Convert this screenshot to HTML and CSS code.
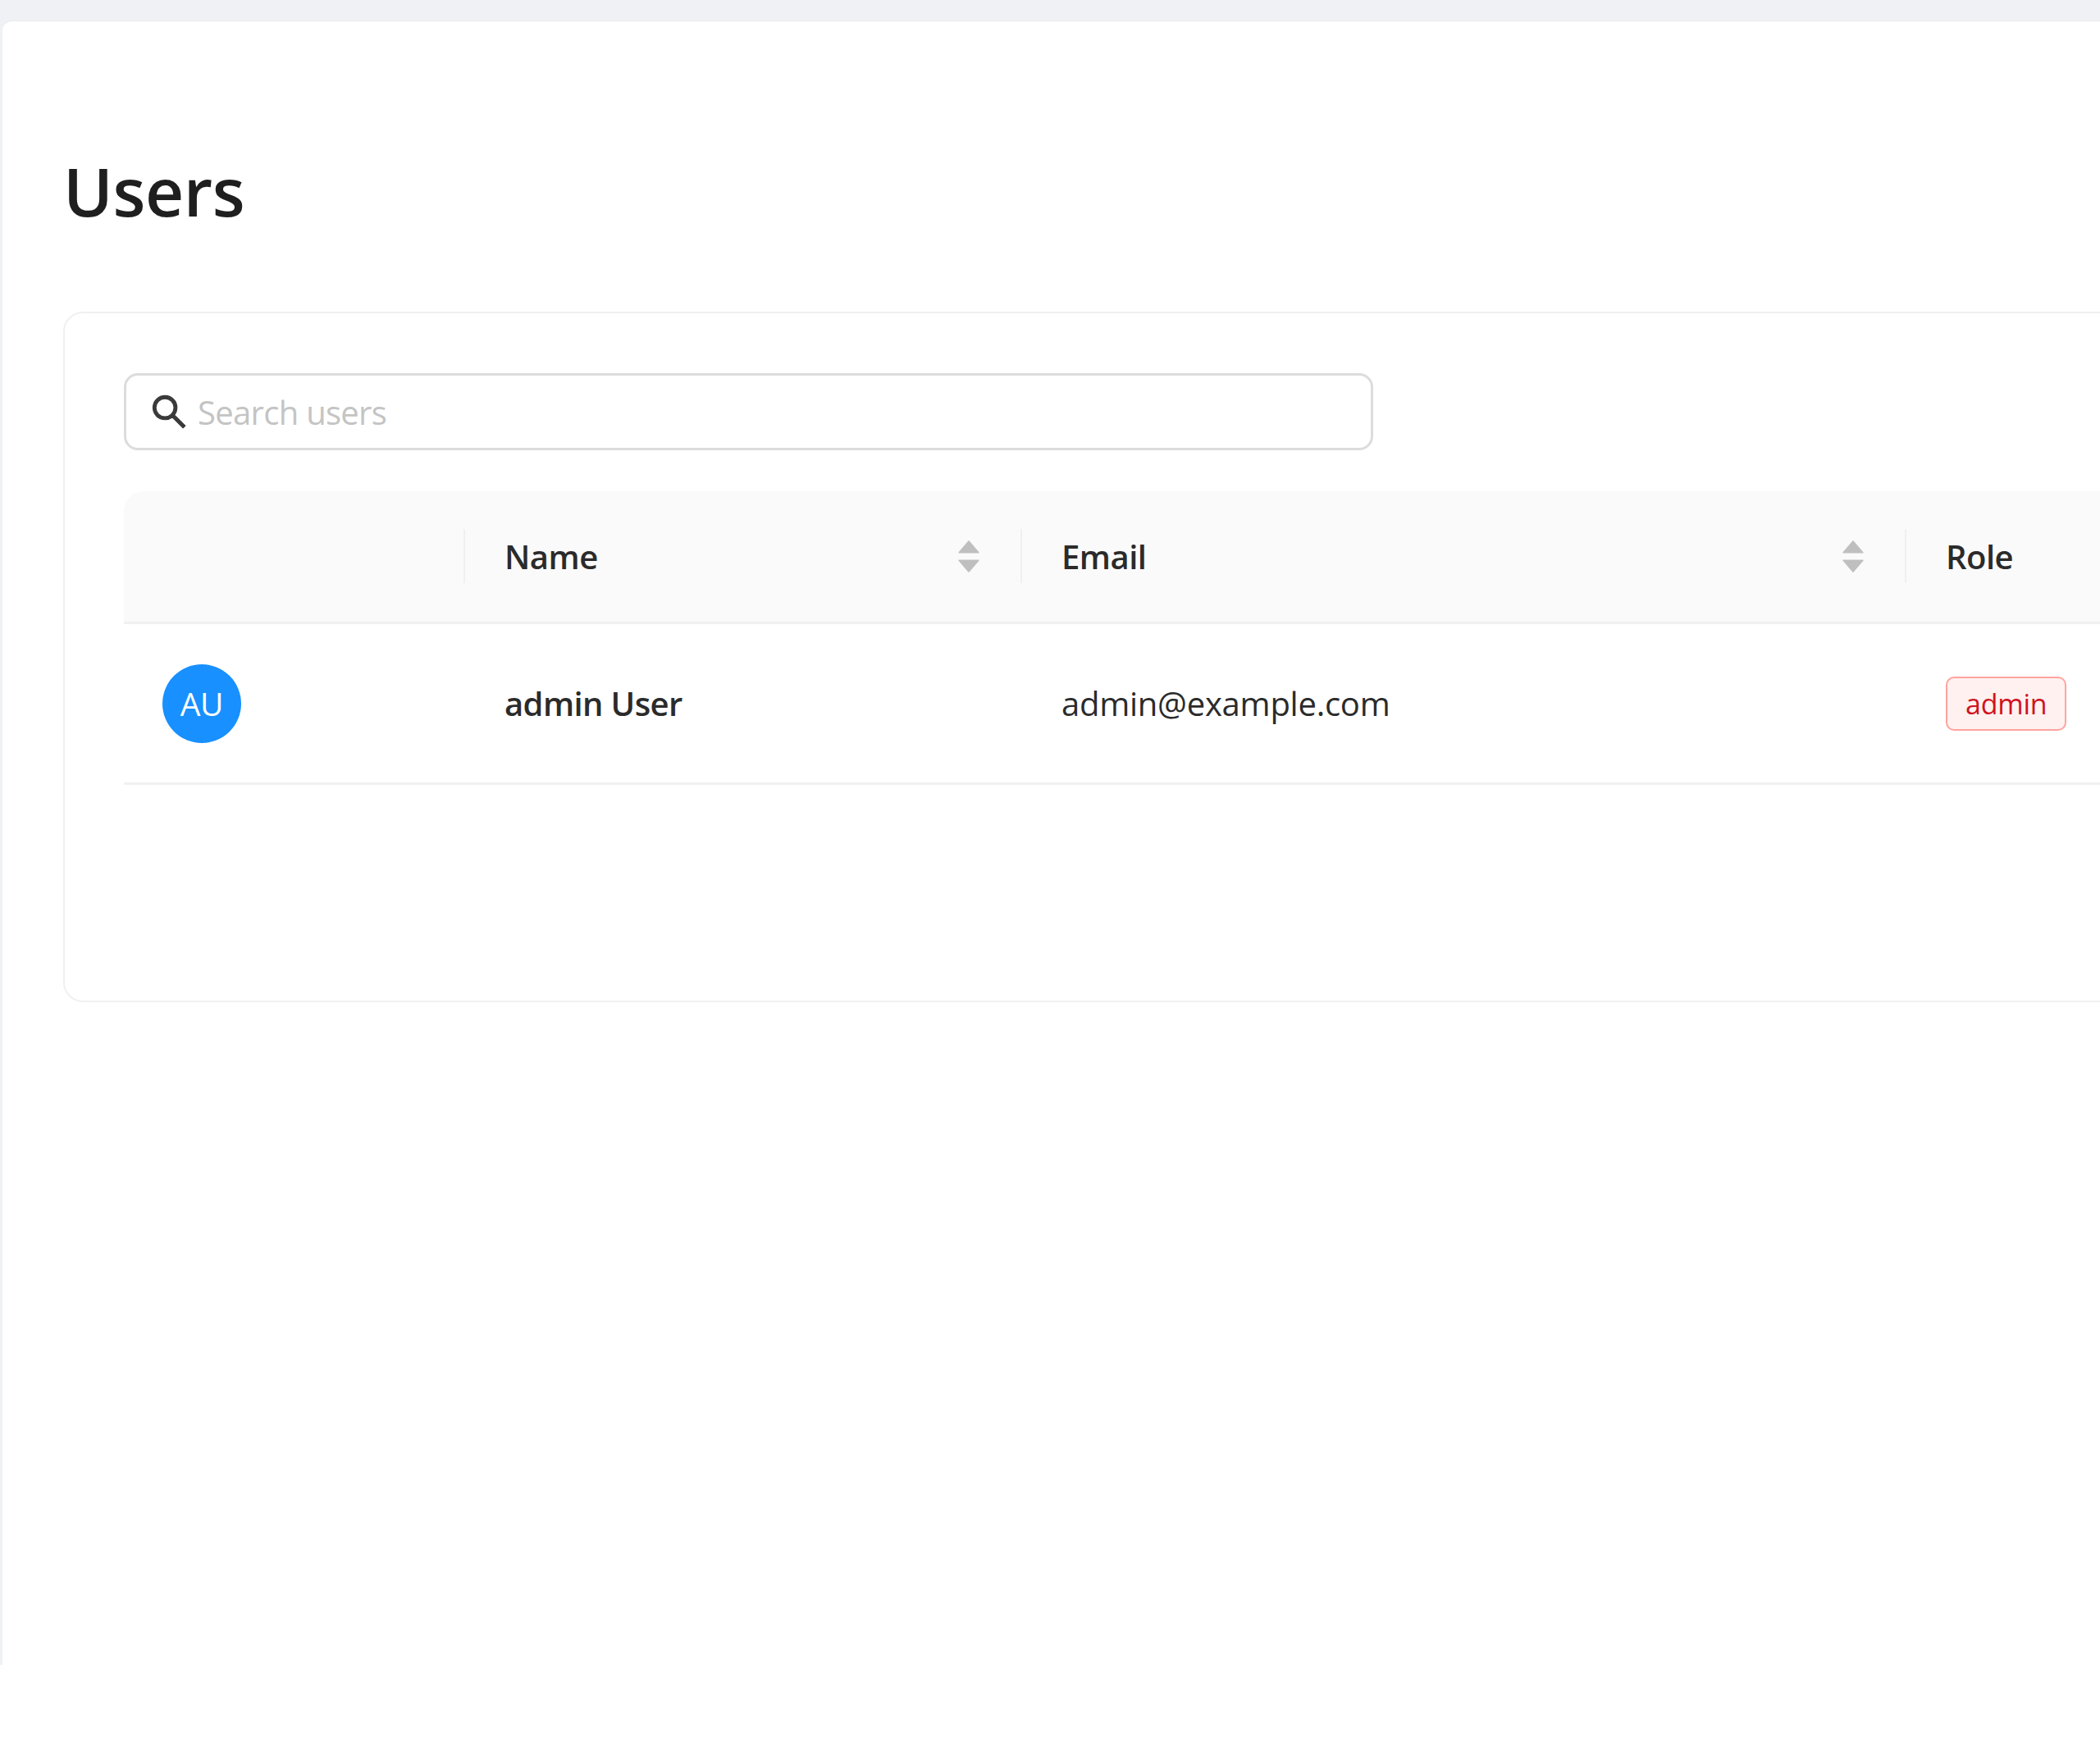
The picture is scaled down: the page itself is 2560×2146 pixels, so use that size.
FILE: index.html
```html
<!DOCTYPE html>
<html>
<head>
  <title>Users</title>
  <link rel="stylesheet" href="styles.css">
</head>
<body>
  <div class="layout">
    <div class="panel">
      <h1 class="page-title">Users</h1>
      <div class="card">
        <label class="search">
          <svg class="search-icon" viewBox="64 64 896 896"><path d="M909.6 854.5L649.9 594.8C690.2 542.7 712 479 712 412.3c0-79.8-31.2-154.7-87.6-211.1-56.4-56.4-131.4-87.6-211.1-87.6s-154.8 31.2-211.1 87.6C145.8 257.6 114.6 332.6 114.6 412.3c0 79.7 31.2 154.7 87.6 211.1 56.4 56.4 131.4 87.6 211.1 87.6 66.8 0 130.4-21.8 182.5-62l259.7 259.6a8.2 8.2 0 0 0 11.6 0l43.6-43.5a8.2 8.2 0 0 0 0-11.6zM570.4 570.4C528 612.7 471.8 636 412 636s-116-23.3-158.4-65.6C211.3 528 188 471.8 188 412s23.3-116 65.6-158.4C296 211.3 352.2 188 412 188s116 23.3 158.4 65.6S636 352.2 636 412s-23.3 116-65.6 158.4z"/></svg>
          <input class="search-input" type="text" placeholder="Search users">
        </label>
        <table class="users">
          <thead>
            <tr>
              <th class="col-avatar"></th>
              <th class="col-name">
                <div class="th-inner">
                  <span>Name</span>
                  <span class="sorter">
                    <svg viewBox="150 300 724 430"><path d="M858.9 689L530.5 308.2c-9.4-10.9-27.5-10.9-37 0L165.1 689c-12.2 14.2-1.2 35 18.5 35h656.8c19.7 0 30.7-20.8 18.5-35z"/></svg>
                    <svg viewBox="150 295 724 430"><path d="M840.4 300H183.6c-19.7 0-30.7 20.8-18.5 35l328.4 380.8c9.4 10.9 27.5 10.9 37 0L858.9 335c12.2-14.2 1.2-35-18.5-35z"/></svg>
                  </span>
                </div>
              </th>
              <th class="col-email">
                <div class="th-inner">
                  <span>Email</span>
                  <span class="sorter">
                    <svg viewBox="150 300 724 430"><path d="M858.9 689L530.5 308.2c-9.4-10.9-27.5-10.9-37 0L165.1 689c-12.2 14.2-1.2 35 18.5 35h656.8c19.7 0 30.7-20.8 18.5-35z"/></svg>
                    <svg viewBox="150 295 724 430"><path d="M840.4 300H183.6c-19.7 0-30.7 20.8-18.5 35l328.4 380.8c9.4 10.9 27.5 10.9 37 0L858.9 335c12.2-14.2 1.2-35-18.5-35z"/></svg>
                  </span>
                </div>
              </th>
              <th class="col-role">Role</th>
            </tr>
          </thead>
          <tbody>
            <tr>
              <td class="cell-avatar"><div class="avatar">AU</div></td>
              <td class="cell-name">admin User</td>
              <td>admin@example.com</td>
              <td><span class="tag">admin</span></td>
            </tr>
          </tbody>
        </table>
      </div>
    </div>
  </div>
</body>
</html>
```

FILE: styles.css
```css
html, body {
  margin: 0;
  height: 100%;
  background: #fff;
  overflow: hidden;
}

body {
  font-family: "Open Sans", "Noto Sans", sans-serif;
  font-size: 40px;
  letter-spacing: -0.25px;
  color: #2b2b2b;
}

.layout {
  width: 2900px;
  height: 2030px;
  padding: 25px 0 0 3px;
  box-sizing: border-box;
  background: #eff1f4;
}

.panel {
  height: 100%;
  padding: 0 0 0 74px;
  box-sizing: border-box;
  background: #fff;
  border-top: 1px solid #e9eaee;
  border-top-left-radius: 12px;
}

.page-title {
  margin: 0;
  padding: 142px 0 84px;
  font-size: 82px;
  font-weight: 600;
  line-height: 128px;
  letter-spacing: -0.4px;
  color: #1f1f1f;
}

.card {
  width: 2760px;
  height: 842px;
  padding: 73px 72px;
  box-sizing: border-box;
  background: #fff;
  border: 2px solid #f0f0f0;
  border-radius: 24px;
}

.search {
  display: flex;
  align-items: center;
  gap: 13px;
  width: 1523px;
  height: 94px;
  padding: 0 30px;
  box-sizing: border-box;
  background: #fff;
  border: 3px solid #dcdcdc;
  border-radius: 17px;
}

.search-icon {
  width: 44px;
  height: 44px;
  fill: #3a3a3a;
  stroke: #3a3a3a;
  stroke-width: 24;
  flex: none;
}

.search-input {
  flex: 1;
  border: none;
  outline: none;
  padding: 0;
  font-family: inherit;
  font-size: 40px;
  letter-spacing: -0.7px;
  color: #262626;
}

.search-input::placeholder {
  color: #c4c4c4;
}

.users {
  margin-top: 50px;
  table-layout: fixed;
  width: 2600px;
  border-collapse: separate;
  border-spacing: 0;
}

.users th {
  position: relative;
  height: 162px;
  padding: 0 51px;
  box-sizing: border-box;
  background: #fafafa;
  border-bottom: 3px solid #f0f0f0;
  font-weight: 600;
  letter-spacing: -0.5px;
  text-align: left;
}

.users th:first-child {
  border-top-left-radius: 24px;
}

/* column separators */
.users th + th::before {
  content: "";
  position: absolute;
  left: 1px;
  top: 46px;
  width: 2px;
  height: 66px;
  background: #f0f0f0;
}

.col-avatar {
  width: 413px;
}

.col-name {
  width: 679px;
}

.col-email {
  width: 1078px;
}

.th-inner {
  display: flex;
  align-items: center;
  justify-content: space-between;
}

.sorter {
  display: flex;
  flex-direction: column;
  gap: 5px;
  margin-right: -2px;
}

.sorter svg {
  display: block;
  width: 26px;
  height: 18px;
  fill: #bfbfbf;
}

.users td {
  height: 196px;
  padding: 0 51px;
  box-sizing: border-box;
  background: #fff;
  border-bottom: 3px solid #f0f0f0;
}

.users td.cell-avatar {
  padding-left: 47px;
}

.users td.cell-name {
  font-weight: 600;
  letter-spacing: -0.6px;
}

.avatar {
  display: flex;
  align-items: center;
  justify-content: center;
  width: 96px;
  height: 96px;
  border-radius: 50%;
  background: #1890ff;
  color: #fff;
  font-size: 39px;
}

.tag {
  display: inline-block;
  padding: 0 22px;
  height: 66px;
  line-height: 62px;
  box-sizing: border-box;
  background: #fff1f0;
  border: 2px solid #ffa39e;
  border-radius: 10px;
  color: #cf1322;
  font-size: 34px;
}
```
